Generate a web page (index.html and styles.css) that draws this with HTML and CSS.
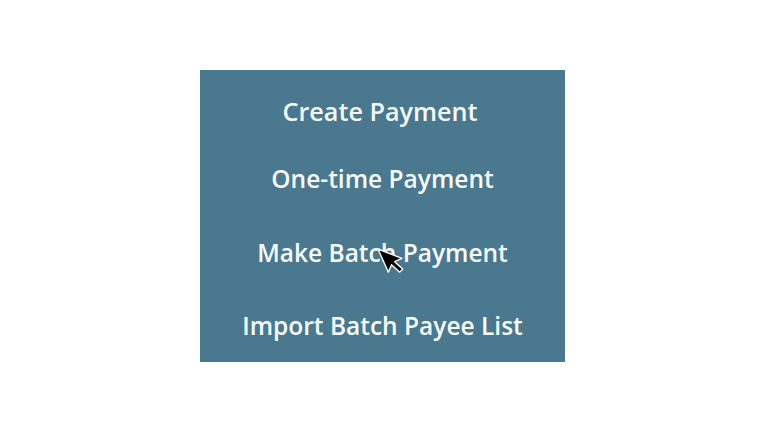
FILE: index.html
```
<!DOCTYPE html>
<html>
<head>
<meta charset="utf-8">
<link rel="stylesheet" href="styles.css">
</head>
<body>
<div class="stage">
  <div class="menu">
    <div class="menu-title">Create Payment</div>
    <ul class="menu-list">
      <li class="menu-item">One-time Payment</li>
      <li class="menu-item">Make Batch Payment</li>
      <li class="menu-item">Import Batch Payee List</li>
    </ul>
    <svg class="cursor" width="32" height="36" viewBox="0 0 32 36">
      <g transform="translate(4 3) rotate(-24) scale(1.5)">
        <path d="M0 0 L0 17 L4 13.2 L7 20 L9.6 18.9 L6.7 12.2 L12 12.2 Z" fill="#000" stroke="#fff" stroke-width="0.9" stroke-linejoin="round"/>
      </g>
    </svg>
  </div>
</div>
</body>
</html>
```
FILE: styles.css
```
html, body {
  margin: 0;
  padding: 0;
  background: #ffffff;
}
.stage {
  width: 768px;
  height: 432px;
  padding: 70px 0 0 200px;
  box-sizing: border-box;
}
.menu {
  position: relative;
  width: 365px;
  height: 292px;
  background: #4a788e;
  box-sizing: border-box;
  padding-top: 24px;
  font-family: "Open Sans", "Noto Sans", sans-serif;
  font-weight: 600;
  font-size: 24.5px;
  line-height: 34px;
  color: #f7fafa;
  text-align: center;
}
.menu-title {
  font-size: 25.2px;
  padding-right: 5px;
  margin-bottom: 34px;
}
.menu-list {
  list-style: none;
  margin: 0;
  padding: 0;
  display: flex;
  flex-direction: column;
  gap: 39.5px;
}
.menu-item {
  margin: 0;
}
.cursor {
  position: absolute;
  left: 174px;
  top: 176px;
}
```
